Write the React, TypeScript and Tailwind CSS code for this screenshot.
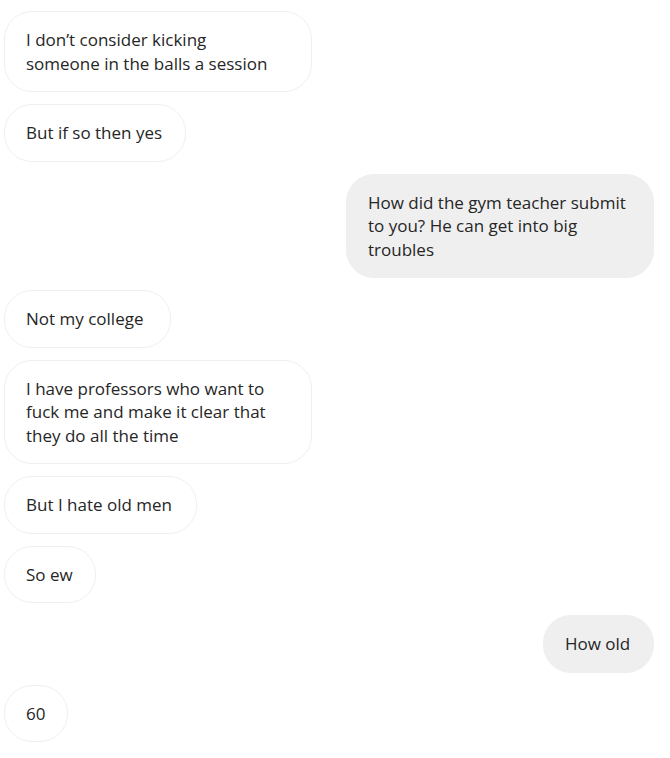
import React from "react";

type Msg = { side: "l" | "r"; lines: string[]; w: string };

const msgs: Msg[] = [
  { side: "l", lines: ["I don\u2019t consider kicking", "someone in the balls a session"], w: "w-[308px]" },
  { side: "l", lines: ["But if so then yes"], w: "w-[182px]" },
  { side: "r", lines: ["How did the gym teacher submit", "to you? He can get into big", "troubles"], w: "w-[308px]" },
  { side: "l", lines: ["Not my college"], w: "w-[167px]" },
  { side: "l", lines: ["I have professors who want to", "fuck me and make it clear that", "they do all the time"], w: "w-[308px]" },
  { side: "l", lines: ["But I hate old men"], w: "w-[193px]" },
  { side: "l", lines: ["So ew"], w: "w-[92px]" },
  { side: "r", lines: ["How old"], w: "w-[111px]" },
  { side: "l", lines: ["60"], w: "w-[64px]" },
];

export default function App() {
  return (
    <div className="w-[670px] h-[758px] bg-white flex flex-col gap-3 pt-[11px] pl-[4px] pr-[16px] text-[#262626] font-['Segoe_UI','Open_Sans','Noto_Sans',sans-serif]">
      {msgs.map((m, i) => (
        <div key={i} className={m.side === "r" ? "flex justify-end" : "flex justify-start"}>
          <div
            className={
              (m.side === "r" ? "bg-[#efefef] " : "bg-white ") +
              "border border-[#efefef] rounded-[28px] px-[21px] py-[16px] text-[17px] leading-[23.5px] whitespace-nowrap " +
              m.w
            }
          >
            {m.lines.map((l, j) => (
              <div key={j}>{l}</div>
            ))}
          </div>
        </div>
      ))}
    </div>
  );
}
